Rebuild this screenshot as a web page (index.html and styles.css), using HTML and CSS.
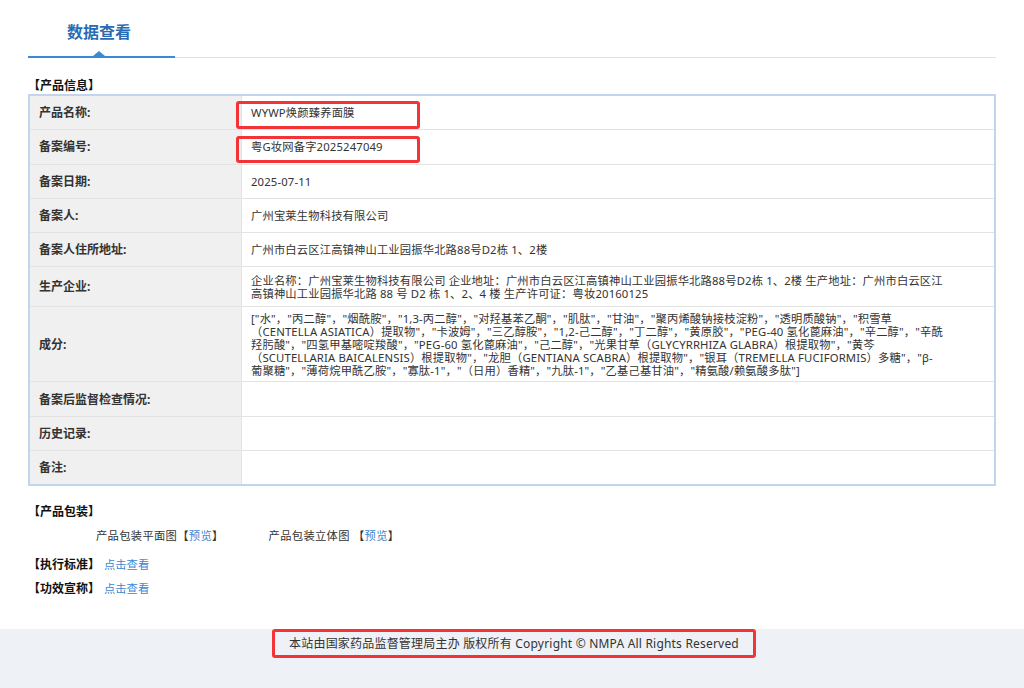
FILE: index.html
```html
<!DOCTYPE html>
<html lang="zh-CN">
<head>
    <meta charset="UTF-8">
    <title>数据查看</title>
    <link rel="stylesheet" href="styles.css">
</head>
<body>
    <div class="page">
        <div class="tabs">
            <div class="tab active">数据查看</div>
        </div>

        <div class="section-title">【产品信息】</div>
        <table class="info">
            <tr>
                <th>产品名称:</th>
                <td><div class="mark mark-name"></div>WYWP焕颜臻养面膜</td>
            </tr>
            <tr>
                <th>备案编号:</th>
                <td><div class="mark mark-no"></div>粤G妆网备字2025247049</td>
            </tr>
            <tr>
                <th>备案日期:</th>
                <td>2025-07-11</td>
            </tr>
            <tr>
                <th>备案人:</th>
                <td>广州宝莱生物科技有限公司</td>
            </tr>
            <tr>
                <th>备案人住所地址:</th>
                <td>广州市白云区江高镇神山工业园振华北路88号D2栋 1、2楼</td>
            </tr>
            <tr>
                <th>生产企业:</th>
                <td class="multi">企业名称：广州宝莱生物科技有限公司 企业地址：广州市白云区江高镇神山工业园振华北路88号D2栋 1、2楼 生产地址：广州市白云区江<br>高镇神山工业园振华北路 88 号 D2 栋 1、2、4 楼 生产许可证：粤妆20160125</td>
            </tr>
            <tr>
                <th>成分:</th>
                <td class="multi dense">["水"，"丙二醇"，"烟酰胺"，"1,3-丙二醇"，"对羟基苯乙酮"，"肌肽"，"甘油"，"聚丙烯酸钠接枝淀粉"，"透明质酸钠"，"积雪草<br>（CENTELLA ASIATICA）提取物"，"卡波姆"，"三乙醇胺"，"1,2-己二醇"，"丁二醇"，"黄原胶"，"PEG-40 氢化蓖麻油"，"辛二醇"，"辛酰<br>羟肟酸"，"四氢甲基嘧啶羧酸"，"PEG-60 氢化蓖麻油"，"己二醇"，"光果甘草（GLYCYRRHIZA GLABRA）根提取物"，"黄芩<br>（SCUTELLARIA BAICALENSIS）根提取物"，"龙胆（GENTIANA SCABRA）根提取物"，"银耳（TREMELLA FUCIFORMIS）多糖"，"β-<br>葡聚糖"，"薄荷烷甲酰乙胺"，"寡肽-1"，"（日用）香精"，"九肽-1"，"乙基己基甘油"，"精氨酸/赖氨酸多肽"]</td>
            </tr>
            <tr>
                <th>备案后监督检查情况:</th>
                <td></td>
            </tr>
            <tr>
                <th>历史记录:</th>
                <td></td>
            </tr>
            <tr>
                <th>备注:</th>
                <td></td>
            </tr>
        </table>

        <div class="section-title pack-title">【产品包装】</div>
        <div class="pack-row">
            <span>产品包装平面图【<a href="#">预览</a>】</span>
            <span>产品包装立体图 【<a href="#">预览</a>】</span>
        </div>
        <div class="link-row"><b>【执行标准】</b><a href="#">点击查看</a></div>
        <div class="link-row"><b>【功效宣称】</b><a href="#">点击查看</a></div>
    </div>

    <div class="footer">
        <span class="footer-text">本站由国家药品监督管理局主办 版权所有 Copyright © NMPA All Rights Reserved</span>
    </div>
</body>
</html>
```

FILE: styles.css
```css
body {
    margin: 0;
    background: #fff;
    color: #333;
    font-family: "Noto Sans", "Noto Sans CJK SC", sans-serif;
    font-size: 11.3px;
}
a {
    color: #3a87d2;
    text-decoration: none;
}

.page {
    padding: 0 28px;
    height: 629px;
}

.tabs {
    padding-top: 20px;
    border-bottom: 1px solid #e2e2e2;
    display: flex;
}
.tab {
    position: relative;
    padding: 0 44px 12px 39px;
    font-size: 16px;
    line-height: 24px;
    font-weight: bold;
    color: #2a6cb3;
    margin-bottom: -1px;
}
.tab.active {
    border-bottom: 2px solid #3b8ad6;
}
.tab.active::after {
    content: "";
    position: absolute;
    left: 50%;
    bottom: 0;
    margin-left: -9px;
    border-left: 6px solid transparent;
    border-right: 6px solid transparent;
    border-bottom: 5px solid #3b8ad6;
}

.section-title {
    margin-top: 20px;
    line-height: 16px;
    font-size: 12px;
    font-weight: bold;
    color: #111;
}

.info {
    width: 100%;
    border-collapse: collapse;
    border: 2px solid #c3d5ee;
}
.info th,
.info td {
    border: 1px solid #e3e3e3;
    height: 17.3px;
    padding: 8px 9px;
    line-height: 13px;
    text-align: left;
    vertical-align: middle;
}
.info th {
    width: 193px;
    background: #f0f0f0;
    font-size: 12px;
    font-weight: bold;
    color: #333;
}
.info td {
    position: relative;
    background: #fff;
    color: #333;
    letter-spacing: 0.15px;
}
.info td.multi {
    padding: 7px 9px 6px;
}
.info td.dense {
    padding: 5px 9px 4px;
}

.mark {
    position: absolute;
    left: -6px;
    top: 5px;
    width: 178px;
    height: 22px;
    border: 3px solid #f43336;
    border-radius: 3px;
}
.mark-no {
    top: 6px;
    height: 21px;
}

.pack-title {
    margin-top: 18px;
}
.pack-row {
    display: flex;
    gap: 45px;
    padding-left: 68px;
    margin-top: 8px;
    line-height: 16px;
    letter-spacing: 0.3px;
}
.link-row {
    margin-top: 13px;
    line-height: 16px;
}
.link-row + .link-row {
    margin-top: 8px;
}
.link-row b {
    font-size: 12px;
    color: #111;
    margin-right: 4px;
}

.footer {
    background: #eef1f5;
    height: 59px;
    text-align: center;
}
.footer-text {
    display: inline-block;
    padding: 4px 14px 3px;
    line-height: 16px;
    font-size: 12px;
    color: #333;
    border: 3px solid #f43336;
    border-radius: 3px;
    margin-left: 4px;
    letter-spacing: 0.2px;
}
```
